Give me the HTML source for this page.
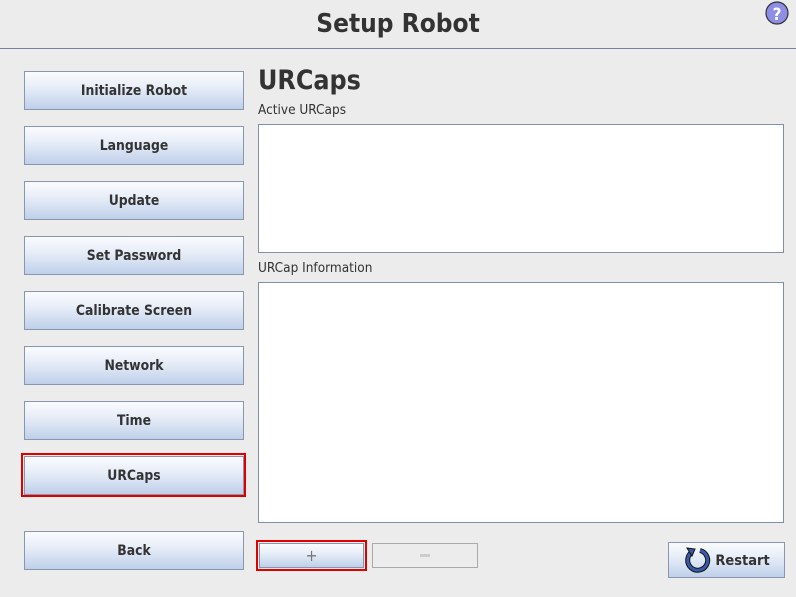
<!DOCTYPE html>
<html><head><style>
body{margin:0;width:796px;height:597px;background:#ececec;font-family:"DejaVu Sans","Liberation Sans",sans-serif;position:relative;overflow:hidden}
.a{position:absolute;font-stretch:condensed}
.btn{position:absolute;box-sizing:border-box;border:1px solid #8797b0;background:linear-gradient(#fafbfe,#e8eef8 40%,#bfd0ea);font-weight:bold;font-size:13.8px;color:#333;display:flex;align-items:center;justify-content:center;padding-top:1px;font-stretch:condensed}
.box{position:absolute;background:#fff;border:1px solid #8090a8;box-sizing:border-box}
.red{position:absolute;border:2px solid #e00000;box-sizing:border-box}
</style></head><body>
<div class="a" style="left:0;top:9px;width:796px;text-align:center;font-size:26px;font-weight:bold;color:#333">Setup Robot</div>
<div class="a" style="left:0;top:48px;width:796px;height:1px;background:#7880a8"></div>
<svg class="a" style="left:765px;top:1px" width="24" height="24"><circle cx="12" cy="12" r="11" fill="#8e8ee6" stroke="#333" stroke-width="1.2"/><text x="12" y="19" text-anchor="middle" font-family="DejaVu Sans" font-weight="bold" font-size="17" fill="#fff">?</text></svg>
<div class="btn" style="left:24px;top:71px;width:220px;height:39px">Initialize Robot</div>
<div class="btn" style="left:24px;top:126px;width:220px;height:39px">Language</div>
<div class="btn" style="left:24px;top:181px;width:220px;height:39px">Update</div>
<div class="btn" style="left:24px;top:236px;width:220px;height:39px">Set Password</div>
<div class="btn" style="left:24px;top:291px;width:220px;height:39px">Calibrate Screen</div>
<div class="btn" style="left:24px;top:346px;width:220px;height:39px">Network</div>
<div class="btn" style="left:24px;top:401px;width:220px;height:39px">Time</div>
<div class="red" style="left:21px;top:453px;width:225px;height:44px"></div>
<div class="btn" style="left:24px;top:456px;width:220px;height:39px">URCaps</div>
<div class="btn" style="left:24px;top:531px;width:220px;height:39px">Back</div>
<div class="a" style="left:258px;top:65px;font-size:26.6px;font-weight:bold;color:#333">URCaps</div>
<div class="a" style="left:258px;top:102px;font-size:13.5px;color:#333">Active URCaps</div>
<div class="box" style="left:258px;top:124px;width:526px;height:129px"></div>
<div class="a" style="left:258px;top:260px;font-size:13.5px;color:#333">URCap Information</div>
<div class="box" style="left:258px;top:282px;width:526px;height:241px"></div>
<div class="red" style="left:256px;top:540px;width:111px;height:31px"></div>
<div class="btn" style="left:259px;top:543px;width:105px;height:25px;font-size:16px;color:#777;font-weight:normal;padding-top:0">+</div>
<div class="a" style="left:372px;top:543px;width:106px;height:25px;box-sizing:border-box;border:1px solid #aaa;background:#ececec"><div class="a" style="left:47px;top:10px;width:10px;height:3px;background:#ccc"></div></div>
<div class="btn" style="left:668px;top:542px;width:117px;height:36px;font-size:14.5px;padding-left:32px">Restart</div>
<svg class="a" style="left:684px;top:546px" width="28" height="28"><path d="M8 6 A10 10 0 1 0 16 4.5" fill="none" stroke="#111" stroke-width="5"/><path d="M8 6 A10 10 0 1 0 16 4.5" fill="none" stroke="#3a5aa8" stroke-width="3"/><path d="M3 2 L11 3 L8 10 Z" fill="#3a5aa8" stroke="#111" stroke-width="1"/></svg>
</body></html>
